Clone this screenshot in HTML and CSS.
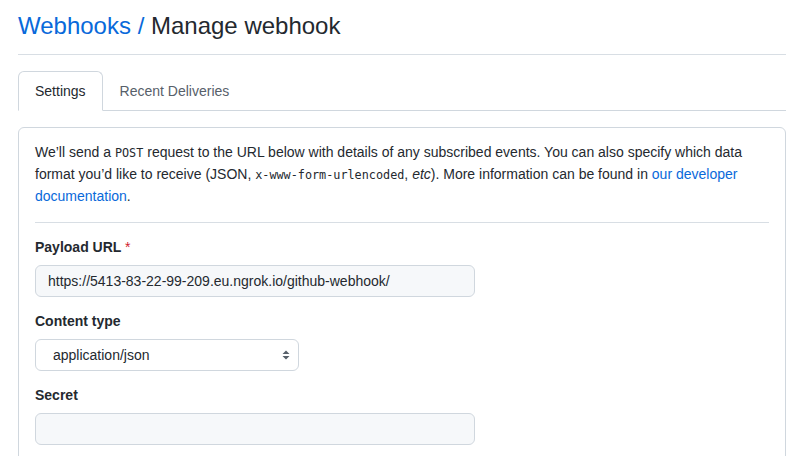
FILE: index.html
```html
<!DOCTYPE html>
<html>
<head>
<meta charset="utf-8">
<link rel="stylesheet" href="styles.css">
</head>
<body>
<div class="page">
  <div class="subhead">
    <h2 class="subhead-title"><a class="crumb" href="#">Webhooks</a><span class="sep"> / </span>Manage webhook</h2>
  </div>
  <nav class="tabnav">
    <a class="tab selected" href="#">Settings</a>
    <a class="tab" href="#">Recent Deliveries</a>
  </nav>
  <div class="box">
    <p class="intro">We’ll send a <code>POST</code> request to the URL below with details of any subscribed events. You can also specify which data format you’d like to receive (JSON, <code>x-www-form-urlencoded</code>, <em>etc</em>). More information can be found in <a class="link" href="#">our developer documentation</a>.</p>
    <hr class="divider">
    <div class="form-group">
      <label class="label">Payload URL <span class="req">*</span></label>
      <div class="input wide">https://5413-83-22-99-209.eu.ngrok.io/github-webhook/</div>
    </div>
    <div class="form-group">
      <label class="label">Content type</label>
      <div class="select">
        <span>application/json</span>
        <svg class="arrows" width="8" height="10" viewBox="0 0 8 10"><path d="M4 0.5 L7.5 4 H0.5 Z M4 9.5 L7.5 6 H0.5 Z" fill="#57606a"/></svg>
      </div>
    </div>
    <div class="form-group">
      <label class="label">Secret</label>
      <div class="input wide"></div>
    </div>
  </div>
</div>
</body>
</html>
```
FILE: styles.css
```css
* { box-sizing: border-box; }
html, body { margin: 0; padding: 0; background: #ffffff; }
body {
  font-family: "Liberation Sans", Arial, sans-serif;
  font-size: 14px;
  line-height: 21px;
  color: #24292f;
}
.page {
  margin: 0 15px 0 18px;
}
.subhead {
  padding-top: 11px;
  padding-bottom: 13px;
  border-bottom: 1px solid #d8dee4;
}
.subhead-title {
  margin: 0;
  font-size: 24px;
  line-height: 30px;
  font-weight: 400;
  color: #24292f;
}
.crumb { color: #0969da; text-decoration: none; }
.sep { color: #0969da; }
.tabnav {
  margin-top: 16px;
  display: flex;
  border-bottom: 1px solid #d0d7de;
  margin-bottom: 16px;
}
.tab {
  padding: 8px 16px;
  line-height: 22px;
  font-size: 14px;
  color: #57606a;
  text-decoration: none;
  border: 1px solid transparent;
  border-radius: 6px 6px 0 0;
  margin-bottom: -1px;
}
.tab.selected {
  color: #24292f;
  background: #ffffff;
  border-color: #d0d7de;
  border-bottom-color: #ffffff;
}
.box {
  border: 1px solid #d0d7de;
  border-radius: 6px;
  padding: 14px 16px 16px;
  min-height: 400px;
}
.intro { margin: 0; }
code {
  font-family: "DejaVu Sans Mono", "Liberation Mono", monospace;
  font-size: 11.8px;
}
em { font-style: italic; }
.link { color: #0969da; text-decoration: none; }
.divider {
  border: 0;
  border-top: 1px solid #d8dee4;
  margin: 15px 0 0;
  height: 0;
}
.form-group {
  margin-top: 14px;
  display: flex;
  flex-direction: column;
  align-items: flex-start;
}
.label {
  font-weight: 700;
  line-height: 21px;
  margin-bottom: 7px;
}
.req { color: #cf222e; font-weight: 400; }
.input {
  height: 32px;
  padding: 5px 12px;
  line-height: 20px;
  background: #f6f8fa;
  border: 1px solid #d0d7de;
  border-radius: 6px;
  color: #24292f;
}
.wide { width: 440px; }
.select {
  width: 264px;
  height: 32px;
  padding: 5px 8px 5px 17px;
  line-height: 20px;
  background: #ffffff;
  border: 1px solid #d0d7de;
  border-radius: 6px;
  display: flex;
  align-items: center;
  justify-content: space-between;
}
.arrows { display: block; }
```
